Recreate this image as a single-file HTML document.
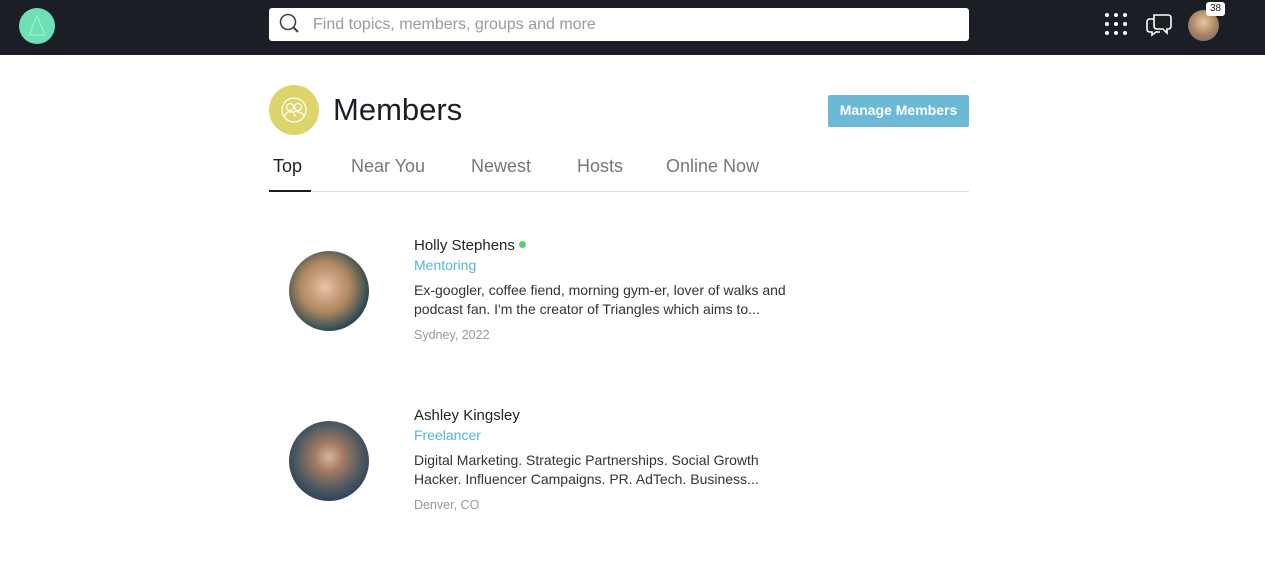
<!DOCTYPE html>
<html><head><meta charset="utf-8"><style>
*{margin:0;padding:0;box-sizing:border-box}
body{width:1265px;height:575px;overflow:hidden;background:#fff;font-family:"Liberation Sans",sans-serif;position:relative}
.top{position:absolute;left:0;top:0;width:1265px;height:55px;background:#1b1e25}
.logo{position:absolute;left:19px;top:8px;width:36px;height:36px;border-radius:50%;background:#6ee0b5}
.search{position:absolute;left:269px;top:8px;width:700px;height:33px;background:#fff;border-radius:3px}
.search span{position:absolute;left:44px;top:8px;font-size:16px;color:#9a9a9a}
.abs{position:absolute}
.tabs span{position:absolute;top:156px;font-size:18px;color:#777}
.name{font-size:15px;color:#222}
.role{font-size:14px;color:#5ab4d6}
.bio{font-size:14px;color:#333;line-height:19px;width:385px}
.loc{font-size:12.5px;color:#999}
</style></head><body>
<div class="top">
 <div class="logo"><svg width="36" height="36"><path d="M18 8 L26 27 L10 27 Z" fill="none" stroke="#a8f0d5" stroke-width="1"/></svg></div>
 <div class="search"><svg class="abs" style="left:9px;top:4px" width="24" height="24"><circle cx="10" cy="10" r="7.5" fill="none" stroke="#444" stroke-width="1.6"/><path d="M15.5 15.5 L20 20" stroke="#444" stroke-width="2"/></svg><span>Find topics, members, groups and more</span></div>
 <svg class="abs" style="left:1104px;top:12px" width="26" height="26"><g fill="#fff"><circle cx="3" cy="3" r="2"/><circle cx="12" cy="3" r="2"/><circle cx="21" cy="3" r="2"/><circle cx="3" cy="12" r="2"/><circle cx="12" cy="12" r="2"/><circle cx="21" cy="12" r="2"/><circle cx="3" cy="21" r="2"/><circle cx="12" cy="21" r="2"/><circle cx="21" cy="21" r="2"/></g></svg>
 <svg class="abs" style="left:1145px;top:11px" width="28" height="26"><path d="M9 4 H23 Q26 4 26 7 V15 Q26 18 23 18 H22 L22 22 L18 18 H12 Q9 18 9 15 Z" fill="none" stroke="#fff" stroke-width="1.6"/><path d="M9 8 H5 Q2 8 2 11 V18 Q2 21 5 21 H7 L7 24 L11 21 H15" fill="none" stroke="#fff" stroke-width="1.6"/></svg>
 <div class="abs" style="left:1188px;top:10px;width:31px;height:31px;border-radius:50%;background:radial-gradient(circle at 50% 40%,#e7c9a0,#a88060 55%,#4a6f8a)"></div>
 <div class="abs" style="left:1206px;top:2px;width:19px;height:14px;background:#fff;border-radius:3px;font-size:10px;color:#222;text-align:center;line-height:14px">38</div>
</div>
<div class="abs" style="left:269px;top:85px;width:50px;height:50px;border-radius:50%;background:#ddd46c"><svg width="50" height="50"><circle cx="25" cy="25" r="12" fill="none" stroke="#fff" stroke-width="1.2"/><circle cx="21" cy="22" r="3.5" fill="none" stroke="#fff" stroke-width="1.2"/><circle cx="29" cy="22" r="3.5" fill="none" stroke="#fff" stroke-width="1.2"/><path d="M15 32 Q17 26 21 27 Q25 26 26 32 M24 27 Q28 26 30 27 Q34 28 35 31" fill="none" stroke="#fff" stroke-width="1.2"/></svg></div>
<div class="abs" style="left:333px;top:92px;font-size:31px;color:#1b1e25">Members</div>
<div class="abs" style="left:828px;top:95px;width:141px;height:32px;background:#6bb9d4;border-radius:2px;color:#fff;font-size:14px;font-weight:bold;text-align:center;line-height:31px">Manage Members</div>
<div class="tabs"><span style="left:273px;color:#1b1e25">Top</span><span style="left:351px">Near You</span><span style="left:471px">Newest</span><span style="left:577px">Hosts</span><span style="left:666px">Online Now</span></div>
<div class="abs" style="left:269px;top:191px;width:700px;height:1px;background:#ddd"></div>
<div class="abs" style="left:269px;top:190px;width:42px;height:2px;background:#1b1e25"></div>

<div class="abs" style="left:289px;top:251px;width:80px;height:80px;border-radius:50%;background:radial-gradient(circle at 45% 45%,#e9c6a8 0,#c9a080 22%,#b08860 40%,#2e4b52 70%,#1f2a30)"></div>
<div class="abs name" style="left:414px;top:237px">Holly Stephens <span style="display:inline-block;width:7px;height:7px;border-radius:50%;background:#5ccf7a;vertical-align:2px"></span></div>
<div class="abs role" style="left:414px;top:257px">Mentoring</div>
<div class="abs bio" style="left:414px;top:281px">Ex-googler, coffee fiend, morning gym-er, lover of walks and podcast fan. I'm the creator of Triangles which aims to...</div>
<div class="abs loc" style="left:414px;top:328px">Sydney, 2022</div>

<div class="abs" style="left:289px;top:421px;width:80px;height:80px;border-radius:50%;background:radial-gradient(circle at 50% 45%,#d8b49a 0,#a07a60 25%,#4e5a60 55%,#2a3a55 80%)"></div>
<div class="abs name" style="left:414px;top:407px">Ashley Kingsley</div>
<div class="abs role" style="left:414px;top:427px">Freelancer</div>
<div class="abs bio" style="left:414px;top:451px">Digital Marketing. Strategic Partnerships. Social Growth Hacker. Influencer Campaigns. PR. AdTech. Business...</div>
<div class="abs loc" style="left:414px;top:498px">Denver, CO</div>
</body></html>
